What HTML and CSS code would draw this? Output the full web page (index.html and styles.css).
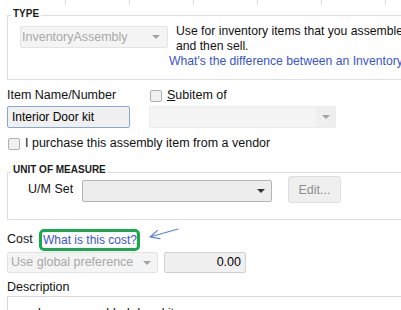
FILE: index.html
```html
<!DOCTYPE html>
<html lang="en">
<head>
    <meta charset="UTF-8">
    <title>New Item</title>
    <link rel="stylesheet" href="styles.css">
</head>
<body>
<div class="page">
    <div class="ticks">
        <span></span><span></span><span></span><span></span><span></span><span></span><span></span>
    </div>

    <div class="group group-type">
        <div class="group-title">TYPE</div>
        <div class="type-body">
            <div class="combo combo-type">
                <span class="combo-text">InventoryAssembly</span>
                <span class="combo-arrow"></span>
            </div>
            <div class="type-help">
                <div>Use for inventory items that you assemble from other inventory items</div>
                <div>and then sell.</div>
                <a class="help-link" href="#">What's the difference between an Inventory Assembly and a Group?</a>
            </div>
        </div>
    </div>

    <div class="item-row">
        <div class="field field-name">
            <div class="field-label">Item Name/Number</div>
            <div class="textbox">Interior Door kit</div>
        </div>
        <div class="field field-sub">
            <div class="check-label"><span class="check"></span><span><u>S</u>ubitem of</span></div>
            <div class="combo combo-sub">
                <span class="combo-text"></span>
                <span class="combo-btn"><span class="combo-arrow"></span></span>
            </div>
        </div>
    </div>

    <div class="check-label purchase"><span class="check"></span><span>I purchase this assembly item from a vendor</span></div>

    <div class="group group-uom">
        <div class="group-title">UNIT OF MEASURE</div>
        <div class="uom-row">
            <div class="uom-label">U/M Set</div>
            <div class="combo combo-uom">
                <span class="combo-text"></span>
                <span class="combo-arrow"></span>
            </div>
            <button class="btn-edit" disabled>Edit...</button>
        </div>
    </div>

    <div class="cost-row">
        <div class="cost-label">Cost</div>
        <div class="highlight"><a class="help-link" href="#">What is this cost?</a></div>
        <svg class="pointer" width="36" height="16" viewBox="0 0 36 16">
            <path d="M4 11 L32 3 M4 11 L14 12.6 M4 11 L11.5 4.4" fill="none" stroke="#5a7fd2" stroke-width="1.1" stroke-linecap="round"/>
        </svg>
    </div>
    <div class="cost-fields">
        <div class="combo combo-cost">
            <span class="combo-text">Use global preference</span>
            <span class="combo-arrow"></span>
        </div>
        <div class="amount">0.00</div>
    </div>

    <div class="field-label desc-label">Description</div>
    <div class="desc-box">prehung assembled door kit</div>
</div>
</body>
</html>
```

FILE: styles.css
```css
html, body {
    margin: 0;
    height: 310px;
    overflow: hidden;
    background: #fff;
}

body {
    font-family: "Liberation Sans", Arial, sans-serif;
    font-size: 12.5px;
    line-height: 15px;
    color: #111;
}

.page {
    width: 480px;
    padding-left: 7px;
}

.ticks {
    display: flex;
    height: 5px;
    margin-left: -5px;
}

.ticks span {
    flex-shrink: 0;
    width: 63px;
    border-right: 1px solid #dcdcdc;
}

.group {
    border: 1px solid #dedede;
}

.group-title {
    display: table;
    margin: -8px 0 0 3px;
    padding: 0 2px;
    background: #fff;
    font-size: 10px;
    font-weight: bold;
    line-height: 12px;
    color: #1a1a1a;
}

.group-type {
    margin-top: 10px;
}

.type-body {
    display: flex;
    align-items: flex-start;
    gap: 8px;
    padding: 6px 0 10px 12px;
}

.type-help {
    margin-top: -2px;
    font-size: 12.2px;
    white-space: nowrap;
}

.help-link {
    color: #3b54cc;
    text-decoration: none;
}

.type-help .help-link {
    display: block;
    margin-left: -7px;
}

/* combo boxes */
.combo {
    display: flex;
    flex-shrink: 0;
    align-items: center;
    box-sizing: border-box;
    height: 22px;
    border: 1px solid #e3e3e3;
    border-radius: 2px;
    background: #f4f4f4;
    color: #a8a8a8;
}

.combo-text {
    flex: 1;
    white-space: nowrap;
    overflow: hidden;
}

.combo-arrow {
    flex-shrink: 0;
    width: 0;
    height: 0;
    border-left: 4px solid transparent;
    border-right: 4px solid transparent;
    border-top: 4px solid #a4a4a4;
    margin-right: 7px;
}

.combo-type {
    width: 148px;
    padding-left: 1px;
}

.combo-sub {
    width: 187px;
    border-color: #ececec;
}

.combo-btn {
    display: flex;
    align-items: center;
    justify-content: center;
    width: 19px;
    height: 20px;
    background: #efefef;
}

.combo-btn .combo-arrow {
    margin: 0;
}

.combo-uom {
    width: 190px;
    margin-top: 4px;
    border-color: #b4b4b4;
    background: #ededed;
}

.combo-uom .combo-arrow {
    border-top-color: #333;
    margin-right: 6px;
}

.combo-cost {
    width: 151px;
    height: 21px;
    padding-left: 3px;
}

.combo-cost .combo-arrow {
    margin-right: 6px;
}

/* item name row */
.item-row {
    display: flex;
    margin-top: 8px;
}

.field {
    flex-shrink: 0;
}

.field-label {
    margin-bottom: 3px;
}

.textbox {
    box-sizing: border-box;
    width: 123px;
    height: 22px;
    padding: 3px 4px;
    border: 1px solid #86a6d6;
    border-radius: 2px;
    background: #f0f0f0;
    font-size: 12px;
    line-height: 15px;
    color: #000;
}

.field-sub {
    margin-left: 19px;
}

.check-label {
    display: flex;
    align-items: center;
    gap: 5px;
    padding-left: 1px;
    margin-bottom: 3px;
    height: 15px;
}

.check {
    flex-shrink: 0;
    box-sizing: border-box;
    width: 12px;
    height: 12px;
    border: 1px solid #b0b0b0;
    border-radius: 2px;
    background: #f0f0f0;
}

.purchase {
    margin-top: 8px;
    margin-bottom: 0;
}

/* unit of measure */
.group-uom {
    margin-top: 21px;
}

.group-uom .group-title {
    margin-top: -9px;
}

.uom-row {
    display: flex;
    align-items: flex-start;
    padding: 0 0 16px 20px;
}

.uom-label {
    flex-shrink: 0;
    width: 54px;
    margin-top: 6px;
}

.btn-edit {
    flex-shrink: 0;
    box-sizing: border-box;
    width: 53px;
    height: 27px;
    margin-left: 16px;
    padding: 0;
    border: 1px solid #dedede;
    border-radius: 3px;
    background: #efefef;
    font-family: inherit;
    font-size: 12.5px;
    color: #8d8d8d;
}

/* cost */
.cost-row {
    display: flex;
    align-items: flex-start;
    margin-top: 9px;
}

.cost-label {
    width: 32px;
    margin-top: 3px;
}

.highlight {
    box-sizing: border-box;
    height: 22px;
    padding: 0 0 0 1px;
    border: 3px solid #19a84b;
    border-radius: 5px;
    font-size: 12px;
    line-height: 16px;
    white-space: nowrap;
}

.pointer {
    margin: -3px 0 0 6px;
}

.cost-fields {
    display: flex;
    gap: 6px;
    margin-top: 1px;
}

.amount {
    box-sizing: border-box;
    width: 82px;
    height: 21px;
    padding: 2px 4px 0 0;
    border: 1px solid #d0d0d0;
    border-radius: 2px;
    background: #f0f0f0;
    text-align: right;
    color: #000;
}

.desc-label {
    margin: 7px 0 1px;
}

.desc-box {
    height: 40px;
    padding: 9px 0 0 12px;
    border: 1px solid #d8d8d8;
}
```
